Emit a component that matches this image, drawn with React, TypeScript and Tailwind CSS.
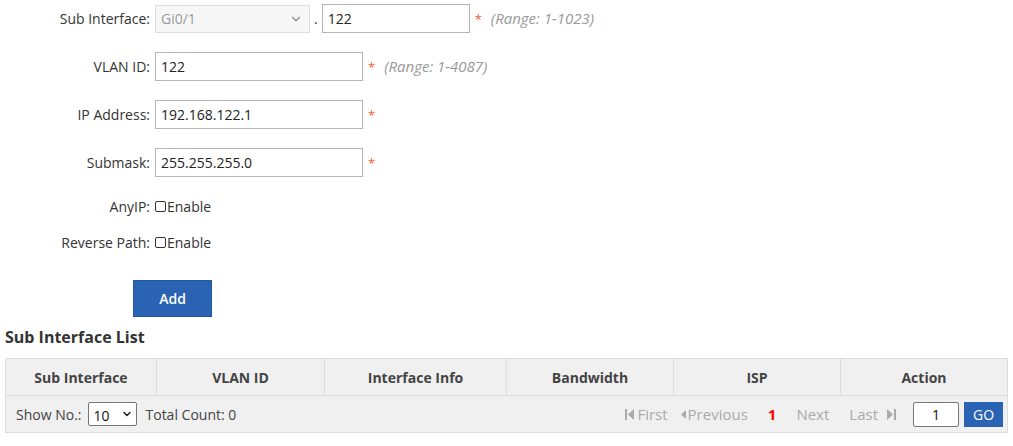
import { ChevronDown } from "lucide-react";

const rowLabel = "w-[151px] shrink-0 text-right pr-[1px] text-[#333]";
const inputBox =
  "h-[29px] border border-[#b5b5b5] bg-white px-[5px] text-[14px] text-[#222] outline-none";

const Star = () => <span className="text-[#f05a3a] text-[13px] leading-none">*</span>;

const Range = ({ text }: { text: string }) => (
  <span className="italic text-[#999] text-[15px]">{text}</span>
);

const FirstIcon = () => (
  <svg width="10" height="13" viewBox="0 0 10 13" className="inline-block">
    <rect x="0" y="1" width="2" height="11" fill="#aaa" />
    <polygon points="9,1 9,12 3,6.5" fill="#aaa" />
  </svg>
);

const PrevIcon = () => (
  <svg width="6" height="13" viewBox="0 0 6 13" className="inline-block">
    <polygon points="6,2 6,11 1,6.5" fill="#aaa" />
  </svg>
);

const LastIcon = () => (
  <svg width="10" height="13" viewBox="0 0 10 13" className="inline-block">
    <polygon points="1,1 1,12 7,6.5" fill="#aaa" />
    <rect x="8" y="1" width="2" height="11" fill="#aaa" />
  </svg>
);

const columns = [
  { name: "Sub Interface", w: "w-[151px]" },
  { name: "VLAN ID", w: "w-[168px]" },
  { name: "Interface Info", w: "w-[182px]" },
  { name: "Bandwidth", w: "w-[167px]" },
  { name: "ISP", w: "w-[167px]" },
  { name: "Action", w: "flex-1" },
];

export default function App() {
  return (
    <div
      className="w-[1013px] h-[446px] bg-white text-[14px] text-[#333] overflow-hidden"
      style={{ fontFamily: '"Open Sans", "Noto Sans", sans-serif' }}
    >
      <div className="flex flex-col pt-[4px]">
        {/* sub interface */}
        <div className="flex items-center h-[29px] mb-[19px]">
          <label className={rowLabel}>Sub Interface:</label>
          <div className="ml-[4px] flex items-center justify-between w-[155px] h-[28px] border border-[#ddd] bg-[#f7f7f7] pl-[5px] pr-[6px] text-[#999]">
            <span>Gi0/1</span>
            <ChevronDown size={14} strokeWidth={2} className="text-[#888]" />
          </div>
          <span className="mx-[4px] text-[#333]">.</span>
          <input className={`${inputBox} w-[148px]`} defaultValue="122" />
          <span className="ml-[5px] mr-[9px]">
            <Star />
          </span>
          <Range text="(Range: 1-1023)" />
        </div>

        <div className="flex items-center h-[29px] mb-[19px]">
          <label className={rowLabel}>VLAN ID:</label>
          <input className={`${inputBox} ml-[4px] w-[208px]`} defaultValue="122" />
          <span className="ml-[5px] mr-[9px]">
            <Star />
          </span>
          <Range text="(Range: 1-4087)" />
        </div>

        <div className="flex items-center h-[29px] mb-[19px]">
          <label className={rowLabel}>IP Address:</label>
          <input className={`${inputBox} ml-[4px] w-[208px]`} defaultValue="192.168.122.1" />
          <span className="ml-[5px]">
            <Star />
          </span>
        </div>

        <div className="flex items-center h-[29px]">
          <label className={rowLabel}>Submask:</label>
          <input className={`${inputBox} ml-[4px] w-[208px]`} defaultValue="255.255.255.0" />
          <span className="ml-[5px]">
            <Star />
          </span>
        </div>

        <div className="flex items-center h-[20px] mt-[19px]">
          <label className={rowLabel}>AnyIP:</label>
          <label className="ml-[4px] flex items-center">
            <span className="w-[11px] h-[11px] border border-[#333] rounded-[2px] mr-[1px]" />
            Enable
          </label>
        </div>

        <div className="flex items-center h-[20px] mt-[16px]">
          <label className={rowLabel}>Reverse Path:</label>
          <label className="ml-[4px] flex items-center">
            <span className="w-[11px] h-[11px] border border-[#333] rounded-[2px] mr-[1px]" />
            Enable
          </label>
        </div>

        <div className="pl-[133px] mt-[28px]">
          <button className="w-[79px] h-[37px] bg-[#2a63b3] border border-[#1f5a9e] text-white text-[14px] font-semibold">
            Add
          </button>
        </div>
      </div>

      <div className="px-[5px] mt-[8px]">
        <h2 className="text-[16px] font-bold text-[#333] leading-[24px]">Sub Interface List</h2>
        <div className="mt-[9px] border border-[#ddd]">
          <div className="flex h-[36px] bg-[#f0f0f0]">
            {columns.map((c, i) => (
              <div
                key={c.name}
                className={`${c.w} flex items-center justify-center font-bold text-[#444] ${
                  i < columns.length - 1 ? "border-r border-[#ddd]" : ""
                }`}
              >
                {c.name}
              </div>
            ))}
          </div>
          <div className="flex items-center h-[37px] bg-[#f0f0f0] border-t border-[#ddd] pl-[10px] pr-[4px]">
            <span className="text-[#444]">Show No.:</span>
            <div className="ml-[6px] flex items-center justify-between w-[49px] h-[24px] border border-[#767676] rounded-[2px] bg-white pl-[5px] pr-[3px] text-[#111]">
              <span className="mt-[2px]">10</span>
              <ChevronDown size={12} strokeWidth={3} className="text-[#222]" />
            </div>
            <span className="ml-[9px] text-[#444]">Total Count: 0</span>

            <div className="ml-auto flex items-center text-[#aaa] text-[15px]">
              <span className="flex items-center gap-[2px]">
                <FirstIcon />
                First
              </span>
              <span className="ml-[12px] flex items-center gap-[2px]">
                <PrevIcon />
                Previous
              </span>
              <span className="ml-[20px] text-[#ff0000] font-bold">1</span>
              <span className="ml-[20px]">Next</span>
              <span className="ml-[20px] flex items-center gap-[8px]">
                Last
                <LastIcon />
              </span>
              <input
                className="ml-[17px] w-[46px] h-[25px] border border-[#777] rounded-[2px] bg-white text-center text-[#111] text-[14px] outline-none"
                defaultValue="1"
              />
              <button className="ml-[5px] w-[39px] h-[25px] bg-[#2a63b3] text-white text-[14px]">GO</button>
            </div>
          </div>
        </div>
      </div>
    </div>
  );
}
